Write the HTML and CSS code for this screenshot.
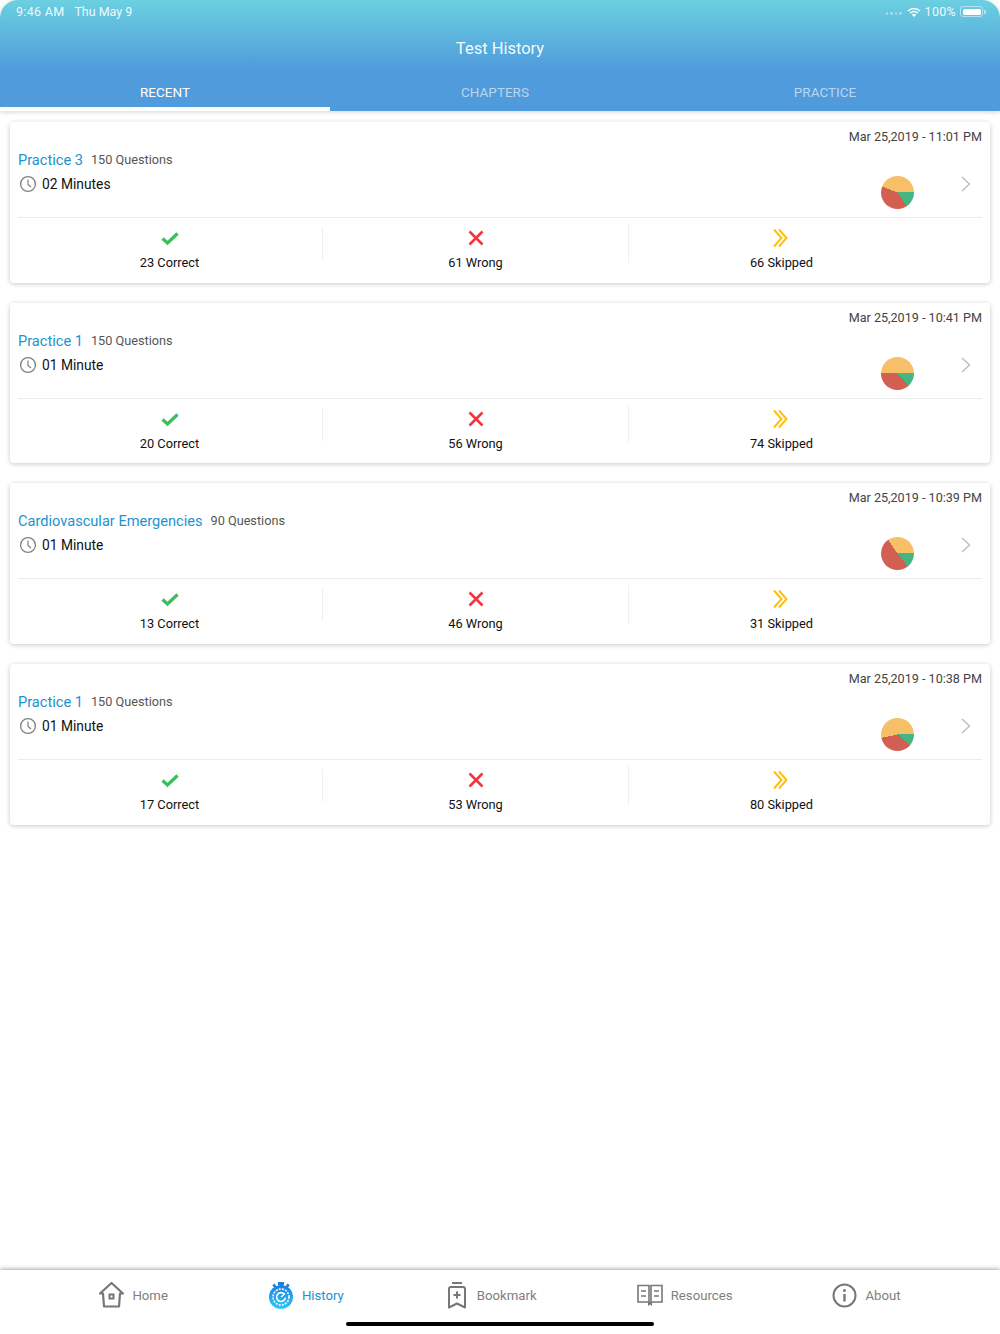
FILE: index.html
```html
<!DOCTYPE html>
<html lang="en">
<head>
    <meta charset="UTF-8">
    <meta name="viewport" content="width=device-width, initial-scale=1.0">
    <title>Test History</title>
    <link rel="stylesheet" href="styles.css">
</head>
<body>
    <svg class="icon-defs" width="0" height="0">
        <symbol id="icon-clock" viewBox="0 0 18 18">
            <circle cx="9" cy="9" r="7.4" fill="none" stroke="#808080" stroke-width="1.3"/>
            <path d="M9 4.5V9.4L12 12" fill="none" stroke="#808080" stroke-width="1.2"/>
        </symbol>
        <symbol id="icon-arrow" viewBox="0 0 10 16">
            <path d="M1 1L8.5 8L1 15" fill="none" stroke="#bdbdbd" stroke-width="1.4"/>
        </symbol>
        <symbol id="icon-check" viewBox="0 0 20 20">
            <path d="M2.5 10.5L7.5 15L17.5 5.5" fill="none" stroke="#3abf5a" stroke-width="3.2"/>
        </symbol>
        <symbol id="icon-cross" viewBox="0 0 20 20">
            <path d="M3.5 3.5L16.5 16.5M16.5 3.5L3.5 16.5" fill="none" stroke="#f6343f" stroke-width="2.6"/>
        </symbol>
        <symbol id="icon-skip" viewBox="0 0 20 20">
            <path d="M2 1.5L9.5 10L2 18.5M7 1.5L14.5 10L7 18.5" fill="none" stroke="#fdc00d" stroke-width="2"/>
        </symbol>
    </svg>

    <header class="top-bar">
        <div class="status-bar">
            <div class="status-time"><span>9:46 AM</span><span class="status-date">Thu May 9</span></div>
            <div class="status-right">
                <span class="signal"><i></i><i></i><i></i><i></i></span>
                <svg class="wifi" width="14" height="10" viewBox="0 0 14 10">
                    <path d="M.4 3.4a9.4 9.4 0 0 1 13.2 0l-1.1 1.1a7.8 7.8 0 0 0-11 0zM2.6 5.6a6.3 6.3 0 0 1 8.8 0l-1.1 1.1a4.7 4.7 0 0 0-6.6 0zM4.8 7.8a3.1 3.1 0 0 1 4.4 0L7 10z" fill="#fff"/>
                </svg>
                <span>100%</span>
                <span class="battery"><b></b></span>
            </div>
        </div>
        <h1 class="page-title">Test History</h1>
        <nav class="tabs">
            <a class="tab active">RECENT</a>
            <a class="tab">CHAPTERS</a>
            <a class="tab">PRACTICE</a>
        </nav>
    </header>

    <main class="history-list">
        <article class="card">
            <div class="card-date">Mar 25,2019 - 11:01 PM</div>
            <div class="card-main">
                <div class="card-info">
                    <div class="card-title"><span class="test-name">Practice 3</span><span class="test-count">150 Questions</span></div>
                    <div class="card-time"><svg class="clock"><use href="#icon-clock"/></svg>02 Minutes</div>
                </div>
                <div class="pie" style="background: conic-gradient(from 90deg, #45b581 0 15.33%, #d25f52 0 56%, #f7bf67 0)"></div>
                <svg class="arrow"><use href="#icon-arrow"/></svg>
            </div>
            <div class="stats">
                <div class="stat short"><svg class="stat-icon"><use href="#icon-check"/></svg>23 Correct</div>
                <div class="stat"><svg class="stat-icon"><use href="#icon-cross"/></svg>61 Wrong</div>
                <div class="stat last"><svg class="stat-icon"><use href="#icon-skip"/></svg>66 Skipped</div>
            </div>
        </article>

        <article class="card">
            <div class="card-date">Mar 25,2019 - 10:41 PM</div>
            <div class="card-main">
                <div class="card-info">
                    <div class="card-title"><span class="test-name">Practice 1</span><span class="test-count">150 Questions</span></div>
                    <div class="card-time"><svg class="clock"><use href="#icon-clock"/></svg>01 Minute</div>
                </div>
                <div class="pie" style="background: conic-gradient(from 90deg, #45b581 0 13.33%, #d25f52 0 50.67%, #f7bf67 0)"></div>
                <svg class="arrow"><use href="#icon-arrow"/></svg>
            </div>
            <div class="stats">
                <div class="stat short"><svg class="stat-icon"><use href="#icon-check"/></svg>20 Correct</div>
                <div class="stat"><svg class="stat-icon"><use href="#icon-cross"/></svg>56 Wrong</div>
                <div class="stat last"><svg class="stat-icon"><use href="#icon-skip"/></svg>74 Skipped</div>
            </div>
        </article>

        <article class="card">
            <div class="card-date">Mar 25,2019 - 10:39 PM</div>
            <div class="card-main">
                <div class="card-info">
                    <div class="card-title"><span class="test-name">Cardiovascular Emergencies</span><span class="test-count">90 Questions</span></div>
                    <div class="card-time"><svg class="clock"><use href="#icon-clock"/></svg>01 Minute</div>
                </div>
                <div class="pie" style="background: conic-gradient(from 90deg, #45b581 0 14.44%, #d25f52 0 65.56%, #f7bf67 0)"></div>
                <svg class="arrow"><use href="#icon-arrow"/></svg>
            </div>
            <div class="stats">
                <div class="stat short"><svg class="stat-icon"><use href="#icon-check"/></svg>13 Correct</div>
                <div class="stat"><svg class="stat-icon"><use href="#icon-cross"/></svg>46 Wrong</div>
                <div class="stat last"><svg class="stat-icon"><use href="#icon-skip"/></svg>31 Skipped</div>
            </div>
        </article>

        <article class="card">
            <div class="card-date">Mar 25,2019 - 10:38 PM</div>
            <div class="card-main">
                <div class="card-info">
                    <div class="card-title"><span class="test-name">Practice 1</span><span class="test-count">150 Questions</span></div>
                    <div class="card-time"><svg class="clock"><use href="#icon-clock"/></svg>01 Minute</div>
                </div>
                <div class="pie" style="background: conic-gradient(from 90deg, #45b581 0 11.33%, #d25f52 0 46.67%, #f7bf67 0)"></div>
                <svg class="arrow"><use href="#icon-arrow"/></svg>
            </div>
            <div class="stats">
                <div class="stat short"><svg class="stat-icon"><use href="#icon-check"/></svg>17 Correct</div>
                <div class="stat"><svg class="stat-icon"><use href="#icon-cross"/></svg>53 Wrong</div>
                <div class="stat last"><svg class="stat-icon"><use href="#icon-skip"/></svg>80 Skipped</div>
            </div>
        </article>
    </main>

    <footer class="bottom-bar">
        <nav class="bottom-nav">
            <a class="nav-item">
                <svg width="25" height="28" viewBox="0 0 25 28">
                    <path d="M12.5 2L24 12.5H21L20 25.5H5L4 12.5H1Z" fill="none" stroke="#777" stroke-width="2.2" stroke-linejoin="round"/>
                    <rect x="10.5" y="13.5" width="4" height="4" fill="none" stroke="#777" stroke-width="2"/>
                </svg>
                <span>Home</span>
            </a>
            <a class="nav-item current">
                <svg width="26" height="28" viewBox="0 0 26 28">
                    <defs>
                        <linearGradient id="watch-fill" x1="0" y1="0" x2="0" y2="1">
                            <stop offset="0" stop-color="#1c7fe0"/>
                            <stop offset="1" stop-color="#2fc9f6"/>
                        </linearGradient>
                    </defs>
                    <path d="M10 1H16V4H14.5V6H11.5V4H10ZM4.3 4.2L6.4 2.6L8.6 5.4L6.4 7ZM21.7 4.2L19.6 2.6L17.4 5.4L19.6 7Z" fill="#1c7fe0"/>
                    <circle cx="13" cy="16" r="12" fill="url(#watch-fill)"/>
                    <circle cx="13" cy="16" r="8" fill="none" stroke="#fff" stroke-width="1.5" stroke-dasharray="2 1.2"/>
                    <path d="M16.4 13.2A4.4 4.4 0 1 0 17.4 16.5" fill="none" stroke="#fff" stroke-width="1.6"/>
                    <path d="M13 16L17 12.5" stroke="#fff" stroke-width="1.4"/>
                </svg>
                <span>History</span>
            </a>
            <a class="nav-item">
                <svg width="25" height="28" viewBox="-3 0 25 28">
                    <path d="M5 2H15" stroke="#777" stroke-width="2"/>
                    <path d="M2 8a2 2 0 0 1 2-2H16a2 2 0 0 1 2 2V26.5L10 22.5L2 26.5Z" fill="none" stroke="#777" stroke-width="2" stroke-linejoin="round"/>
                    <path d="M10 10.5V17.5M6.5 14H13.5" stroke="#777" stroke-width="2"/>
                </svg>
                <span>Bookmark</span>
            </a>
            <a class="nav-item">
                <svg width="26" height="22" viewBox="0 0 26 22">
                    <path d="M1 1.5H12V18H1ZM14 1.5H25V18H14Z" fill="none" stroke="#777" stroke-width="1.6"/>
                    <path d="M4 7H9M4 12H9M17 7H22M17 12H22" stroke="#777" stroke-width="1.3"/>
                    <path d="M11 18H15V22L13 20.5L11 22Z" fill="#777"/>
                </svg>
                <span>Resources</span>
            </a>
            <a class="nav-item">
                <svg width="25" height="25" viewBox="0 0 25 25">
                    <circle cx="12.5" cy="12.5" r="11" fill="none" stroke="#777" stroke-width="2"/>
                    <circle cx="12.5" cy="7.5" r="1.5" fill="#777"/>
                    <path d="M12.5 11V18.500" stroke="#777" stroke-width="2.4"/>
                </svg>
                <span>About</span>
            </a>
        </nav>
        <div class="home-indicator"></div>
    </footer>
</body>
</html>
```

FILE: styles.css
```css
* {
    box-sizing: border-box;
}
html, body {
    height: 100%;
}
body {
    margin: 0;
    height: 1334px;
    display: flex;
    flex-direction: column;
    font-family: Roboto, "Liberation Sans", sans-serif;
    background: #fff;
    color: #111;
    overflow: hidden;
}
.icon-defs {
    position: absolute;
}

/* header */
.top-bar {
    height: 111px;
    flex-shrink: 0;
    color: #fff;
    background: linear-gradient(#6bd0e1 0, #4f9bdb 70px);
    border-radius: 18px 18px 0 0;
    box-shadow: 0 1px 5px rgba(0,0,0,0.18);
    position: relative;
}
.status-bar {
    height: 23px;
    padding: 0 17px 0 16px;
    display: flex;
    justify-content: space-between;
    align-items: center;
    font-size: 12.5px;
    letter-spacing: 0.3px;
    color: rgba(255,255,255,0.92);
}
.status-date {
    margin-left: 10px;
    letter-spacing: 0;
}
.status-right {
    display: flex;
    align-items: center;
}
.signal {
    display: flex;
    gap: 2px;
    margin-right: 5px;
    margin-top: 4px;
}
.signal i {
    width: 2.5px;
    height: 2.5px;
    border-radius: 50%;
    background: rgba(255,255,255,0.4);
}
.wifi {
    margin-right: 4px;
}
.battery {
    width: 23px;
    height: 11px;
    margin-left: 4px;
    padding: 1.5px;
    border: 1px solid rgba(255,255,255,0.5);
    border-radius: 3px;
    position: relative;
    display: block;
}
.battery b {
    display: block;
    height: 100%;
    background: #fff;
    border-radius: 1.5px;
}
.battery::after {
    content: "";
    position: absolute;
    right: -3.5px;
    top: 2.5px;
    width: 1.5px;
    height: 4px;
    background: rgba(255,255,255,0.5);
}
.page-title {
    margin: 0;
    height: 49px;
    line-height: 52px;
    text-align: center;
    font-size: 16.5px;
    font-weight: 400;
    color: rgba(255,255,255,0.95);
}
.tabs {
    display: flex;
    height: 39px;
}
.tab {
    width: 330px;
    padding-top: 4px;
    text-align: center;
    font-size: 13.5px;
    line-height: 32px;
    color: rgba(255,255,255,0.6);
}
.tab.active {
    color: #fff;
    border-bottom: 4px solid #fff;
}

/* cards */
.history-list {
    flex: 1;
    padding: 11px 10px 0;
}
.card {
    height: 160.67px;
    margin-bottom: 20px;
    padding: 0 8px;
    background: #fff;
    border-radius: 4px;
    box-shadow: 0 1px 5px rgba(0,0,0,0.22);
}
.card-date {
    height: 28px;
    line-height: 30px;
    text-align: right;
    font-size: 12.6px;
    color: #444;
}
.card-main {
    height: 68px;
    display: flex;
    align-items: flex-start;
    border-bottom: 1px solid #ececec;
}
.card-info {
    flex: 1;
}
.card-title {
    height: 20px;
    line-height: 22px;
    display: flex;
    align-items: center;
}
.test-name {
    font-size: 14.6px;
    color: #1b93cf;
}
.test-count {
    margin-left: 8px;
    font-size: 12.7px;
    color: #555;
}
.card-time {
    height: 20px;
    margin-top: 4px;
    display: flex;
    align-items: center;
    font-size: 13.8px;
}
.clock {
    width: 18px;
    height: 18px;
    margin: 0 5px 0 1px;
}
.pie {
    width: 33px;
    height: 33px;
    margin-top: 26px;
    border-radius: 50%;
}
.arrow {
    width: 10px;
    height: 16px;
    margin: 26px 11px 0 47px;
}
.stats {
    display: flex;
    margin-left: -1px;
}
.stat {
    width: 306px;
    height: 39px;
    margin-top: 6px;
    padding-top: 4px;
    display: flex;
    flex-direction: column;
    align-items: center;
    gap: 7px;
    font-size: 12.8px;
    line-height: 16px;
    border-right: 1px solid #f0f0f0;
}
.stat.short {
    height: 33px;
    margin-top: 9px;
    padding-top: 1px;
}
.stat.last {
    border-right-color: transparent;
}
.stat-icon {
    width: 20px;
    height: 20px;
    flex-shrink: 0;
}

/* bottom tab bar */
.bottom-bar {
    height: 64px;
    flex-shrink: 0;
    position: relative;
    background: #fff;
    box-shadow: 0 -1px 4px rgba(0,0,0,0.35);
}
.bottom-nav {
    height: 50px;
    display: flex;
    justify-content: center;
    align-items: center;
    gap: 100px;
}
.nav-item {
    display: flex;
    align-items: center;
    gap: 8px;
    font-size: 13.2px;
    color: #808080;
}
.nav-item.current {
    color: #1b93cf;
}
.home-indicator {
    position: absolute;
    left: 346px;
    bottom: 8px;
    width: 308px;
    height: 4px;
    border-radius: 2px;
    background: #000;
}
```
